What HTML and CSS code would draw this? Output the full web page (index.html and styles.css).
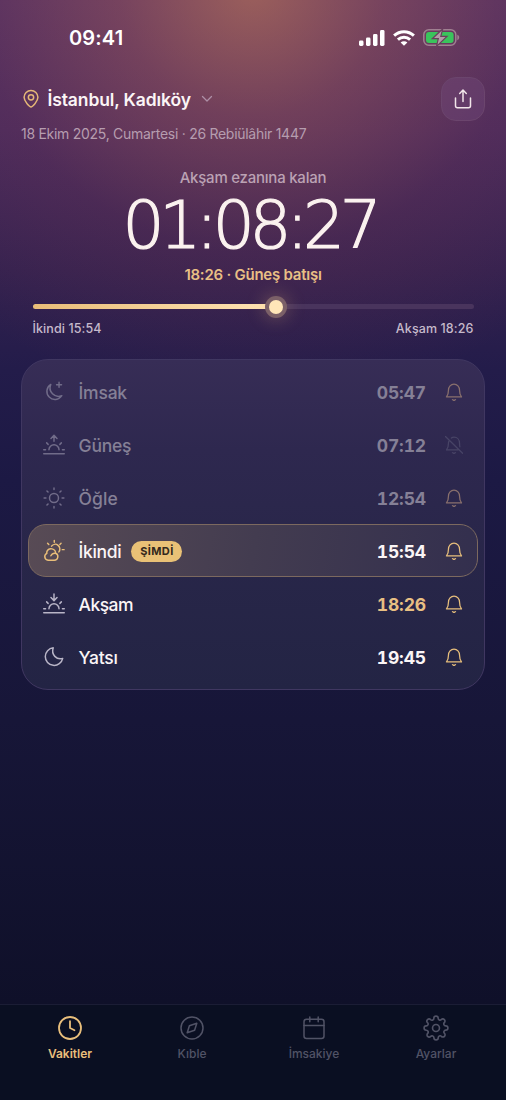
FILE: index.html
```
<!DOCTYPE html>
<html lang="tr">
<head>
<meta charset="utf-8">
<title>Vakitler</title>
<link rel="stylesheet" href="styles.css">
</head>
<body>
<svg class="defs" width="0" height="0" aria-hidden="true">
  <symbol id="bell" viewBox="0 0 24 24"><path d="M2 18.500h20c-2-2.200-2.600-4.300-2.600-8.800C19.400 5 16.200 1.600 12 1.600S4.600 5 4.600 9.700c0 4.500-.6 6.600-2.600 8.800zM10 22.200c1 1 3 1 4 0"/></symbol>
  <symbol id="belloff" viewBox="0 0 24 24"><path d="M17 18.500H2c2-2.200 2.600-4.300 2.600-8.800q0-1.300.4-2.600M8.500 2.700c1-.7 2.200-1.100 3.500-1.100 4.200 0 7.400 3.400 7.400 8.100 0 2.200.1 3.700.4 4.900M10 22.200c1 1 3 1 4 0M.5.500 23.500 23"/></symbol>
</svg>
<main class="screen">
  <header class="status">
    <span class="clock">09:41</span>
    <div class="signals">
      <svg width="26" height="17" viewBox="0 0 26 17"><g fill="#fff"><rect x="0" y="10.500" width="4.500" height="5.500" rx="1.400"/><rect x="7" y="7.500" width="4.500" height="8.500" rx="1.400"/><rect x="14" y="4" width="4.500" height="12" rx="1.400"/><rect x="21" y="0" width="4.500" height="16" rx="1.400"/></g></svg>
      <svg width="22" height="17" viewBox="0 0 22 17" fill="none" stroke="#fff" stroke-width="3"><path d="M1.100 5.700C6.800.4 15.200.4 20.900 5.700M4.900 9.700c3.500-3.200 8.700-3.200 12.200 0"/><path d="M11 15.800 7.600 12.400c1.900-1.600 4.900-1.600 6.800 0z" fill="#fff" stroke="none"/></svg>
      <svg width="37" height="18" viewBox="0 0 37 18"><rect x=".8" y=".8" width="32" height="15.400" rx="5" fill="none" stroke="#9f8091" stroke-width="1.500"/><rect x="3" y="3" width="27.600" height="11" rx="3" fill="#3ac45c"/><path d="M34.300 5.800c2.500.8 2.500 4.600 0 5.400z" fill="#9f8091"/><path d="M19.800-.3 9.300 9.700h6L13.500 17.400 24 7.400h-6.200z" class="bolt"/></svg>
    </div>
  </header>

  <section class="top">
    <div>
      <div class="place">
        <svg class="pin" width="20" height="20" viewBox="0 0 24 24"><path d="M12 21.500c-1.500 0-8.300-6.500-8.300-11.500a8.300 8.300 0 0 1 16.600 0c0 5-6.800 11.500-8.300 11.500z"/><circle cx="12" cy="10" r="3.200"/></svg>
        <span class="city">İstanbul, Kadıköy</span>
        <svg class="chev" width="12" height="8" viewBox="0 0 12 8"><path d="m1.500 1.500 4.500 4.500 4.500-4.500"/></svg>
      </div>
      <p class="date">18 Ekim 2025, Cumartesi · 26 Rebiülâhir 1447</p>
    </div>
    <button class="share" aria-label="Paylaş"><svg width="22" height="22" viewBox="0 0 22 22"><path d="M3.500 10v7.800q0 2 2 2h11q2 0 2-2V10M11 13.500V2.300M7.700 5.500 11 2.100l3.300 3.400"/></svg></button>
  </section>

  <section class="hero">
    <p class="label">Akşam ezanına kalan</p>
    <div class="count">01:08:27</div>
    <p class="target">18:26 · Güneş batışı</p>
    <div class="track"><div class="fill"></div><div class="knob"></div></div>
    <div class="ends"><span class="from">İkindi 15:54</span><span class="to">Akşam 18:26</span></div>
  </section>

  <section class="card">
    <div class="row past">
      <svg class="ico" viewBox="0 0 24 24"><path d="M8.500 3.800A8.800 8.800 0 1 0 20.500 16 9.200 9.200 0 0 1 8.500 3.800zM17.500 1.300v5.400M14.800 4h5.400"/></svg>
      <span class="name n1">İmsak</span><time>05:47</time><svg class="bell"><use href="#bell"/></svg>
    </div>
    <div class="row past">
      <svg class="ico" viewBox="0 0 24 24"><path d="M.8 21.500h22.400M.8 17.200h2M21.200 17.200h2M6.500 17.200a5.500 5.500 0 0 1 11 0M4 9.700l1.600 1.600M20 9.700l-1.600 1.600M12 8V2M8.700 4.800 12 1.500 15.300 4.800"/></svg>
      <span class="name n2">Güneş</span><time>07:12</time><svg class="bell off"><use href="#belloff"/></svg>
    </div>
    <div class="row past">
      <svg class="ico" viewBox="0 0 24 24"><circle cx="12" cy="12" r="4.900"/><path d="M12 1.200v1.500M12 21.300v1.500M1.200 12h2M20.800 12h2M4.300 4.300l1.200 1.200M18.500 18.500l1.200 1.200M4.300 19.700l1.200-1.200M18.500 5.500l1.200-1.200"/></svg>
      <span class="name n3">Öğle</span><time>12:54</time><svg class="bell"><use href="#bell"/></svg>
    </div>
    <div class="row now">
      <svg class="ico" viewBox="0 0 24 24"><path d="M5.500 22h6.700a3.900 3.900 0 0 0 1.600-7.500A5 5 0 0 0 4.300 12.400c-.2.700-.2 1.400-.1 2.100A3.950 3.950 0 0 0 5.500 22M8.600 17.200c1-2.100 3.200-3 5.200-2.700M9.300 6.700a5 5 0 0 1 8 6.300M12.300.6v1.800M21 10.500h2M5 3.600l1.300 1.300M19.700 3.600l-1.300 1.300"/></svg>
      <span class="name n4">İkindi</span><span class="tag"><b>ŞİMDİ</b></span><time>15:54</time><svg class="bell"><use href="#bell"/></svg>
    </div>
    <div class="row next">
      <svg class="ico" viewBox="0 0 24 24"><path d="M.8 21.500h22.400M.8 17.200h2M21.200 17.200h2M6.500 17.200a5.500 5.500 0 0 1 11 0M4 9.700l1.600 1.600M20 9.700l-1.600 1.600M12 1v6.900M8.700 5 12 8.300l3.300-3.300"/></svg>
      <span class="name n5">Akşam</span><time>18:26</time><svg class="bell"><use href="#bell"/></svg>
    </div>
    <div class="row">
      <svg class="ico" viewBox="0 0 24 24"><path d="M11.200 2A9.600 9.600 0 1 0 21.500 13.500 C15 15.500 8.500 9.500 11.200 2z"/></svg>
      <span class="name n6">Yatsı</span><time>19:45</time><svg class="bell"><use href="#bell"/></svg>
    </div>
  </section>

  <nav class="tabs">
    <a class="tab on"><svg viewBox="0 0 26 26"><circle cx="13" cy="13" r="11"/><path d="M13 6.200V13l4.500 2.200"/></svg><span class="t1">Vakitler</span></a>
    <a class="tab"><svg viewBox="0 0 26 26"><circle cx="13" cy="13" r="11"/><path d="m17.800 8.200-2.200 7-7.400 2.600 2.200-7z"/></svg><span class="t2">Kıble</span></a>
    <a class="tab"><svg viewBox="0 0 26 26"><rect x="3" y="4.300" width="20" height="19.200" rx="2.500"/><path d="M3 10.600h20M8.800 2v4.800M17.200 2v4.800"/></svg><span class="t3">İmsakiye</span></a>
    <a class="tab"><svg viewBox="0 0 24 24"><circle cx="12" cy="12" r="3.200"/><path d="M19.400 15a1.650 1.650 0 0 0 .33 1.820l.06.060a2 2 0 1 1-2.830 2.830l-.06-.06a1.650 1.650 0 0 0-1.820-.33 1.650 1.650 0 0 0-1 1.510V21a2 2 0 0 1-4 0v-.09A1.650 1.650 0 0 0 9 19.400a1.650 1.650 0 0 0-1.820.33l-.06.06a2 2 0 1 1-2.830-2.830l.06-.06a1.650 1.650 0 0 0 .33-1.820 1.650 1.650 0 0 0-1.510-1H3a2 2 0 0 1 0-4h.09A1.650 1.650 0 0 0 4.600 9a1.650 1.650 0 0 0-.33-1.820l-.06-.06a2 2 0 1 1 2.830-2.830l.06.06a1.650 1.650 0 0 0 1.820.33H9a1.650 1.650 0 0 0 1-1.510V3a2 2 0 0 1 4 0v.09a1.650 1.650 0 0 0 1 1.510 1.650 1.650 0 0 0 1.820-.33l.06-.06a2 2 0 1 1 2.830 2.830l-.06.06a1.650 1.650 0 0 0-.33 1.820V9a1.650 1.650 0 0 0 1.510 1H21a2 2 0 0 1 0 4h-.09a1.650 1.650 0 0 0-1.510 1z"/></svg><span class="t4">Ayarlar</span></a>
  </nav>
</main>
</body>
</html>
```
FILE: styles.css
```
* { box-sizing: border-box; }
body { margin: 0; font-family: Inter, "Open Sans", sans-serif; color: #fbf5f6; }
p { margin: 0; }
svg { fill: none; stroke-linecap: round; stroke-linejoin: round; flex: none; }
.defs { position: absolute; }
.screen {
  width: 506px; height: 1100px; display: flex; flex-direction: column; overflow: hidden;
  background:
    radial-gradient(440px 420px at 50% -10px, rgba(235,145,85,.49) 0, rgba(225,120,85,.28) 30%, rgba(180,75,85,.13) 62%, rgba(160,60,90,0) 100%),
    linear-gradient(#4e2f62 0, #45295c 130px, #33214f 270px, #231c4a 370px, #1c1944 480px, #171638 720px, #0f1029 1004px);
}
.status { height: 76px; padding: 0 46px 0 69px; display: flex; justify-content: space-between; align-items: center; }
.clock { font-size: 20px; font-weight: 600; line-height: 24px; letter-spacing: .15px; color: #fff; }
.signals { display: flex; align-items: center; gap: 8px; }
.signals svg { stroke-linecap: butt; stroke-linejoin: miter; }
.bolt { fill: #b39ba8; stroke: #69405c; stroke-width: 1.200; }

.top { height: 78px; padding: 1px 21px 0; display: flex; justify-content: space-between; align-items: flex-start; }
.place { height: 44px; display: flex; align-items: center; }
.pin { stroke: #e5b877; stroke-width: 1.800; }
.city { margin-left: 6.500px; width: 146px; font-size: 17.500px; font-weight: 600; letter-spacing: -.12px; white-space: nowrap; }
.chev { margin-left: 7px; stroke: #ad8fa6; stroke-width: 1.300; }
.date { margin-top: 4px; font-size: 14px; line-height: 18px; color: #b69daf; letter-spacing: -.28px; white-space: nowrap; }
.share { width: 44px; height: 44px; padding: 0; border: 1px solid #6b456d; border-radius: 15px; background: rgba(115,75,125,.4); display: grid; place-items: center; }
.share svg { stroke: #f2e6ea; stroke-width: 1.500; }

.hero { height: 205px; padding: 14px 33px 0; display: flex; flex-direction: column; align-items: center; }
.label { font-size: 15px; line-height: 20px; color: #bba2b4; letter-spacing: -.23px; font-weight: 500; }
.count { height: 76px; font-family: "DejaVu Sans Light", "DejaVu Sans ExtraLight", "DejaVu Sans", sans-serif; font-weight: 200; font-size: 66px; line-height: 76px; letter-spacing: -5.300px; color: #fbf2ef; -webkit-text-stroke: 1.200px #fbf2ef; margin-right: 7px; }
.target { margin-top: 1px; font-size: 15px; line-height: 20px; font-weight: 600; color: #e8bf85; letter-spacing: -.24px; }
.track { position: relative; margin-top: 19px; width: 441px; height: 5px; border-radius: 3px; background: #49345d; }
.fill { width: 243px; height: 5px; border-radius: 3px; background: linear-gradient(90deg, #e9bd78, #ffe4b5); }
.knob { position: absolute; left: 236px; top: -4.500px; width: 14px; height: 14px; border-radius: 50%; background: #ffe6b8; box-shadow: 0 0 0 4px #7b6068, 0 0 18px 5px rgba(240,190,120,.28); }
.ends { width: 441px; margin-top: 11px; display: flex; justify-content: space-between; font-size: 12.500px; line-height: 17px; color: #c6bacb; font-weight: 500; letter-spacing: .1px; }

.card { margin: 0 21px; padding: 5px 6px; height: 331px; border: 1px solid #403761; border-radius: 27px; background: linear-gradient(#372d56 0, #2e284f 90px, #282649 200px, #232444 100%); }
.row { height: 53px; padding: 1px 14px 0; display: flex; align-items: center; border: 1px solid transparent; }
.ico { width: 22px; height: 22px; stroke: #b9b5c7; stroke-width: 1.600; overflow: visible; }
.name { padding-top: 1px; margin-left: 13.500px; font-size: 17.500px; line-height: 22px; font-weight: 500; letter-spacing: -.2px; white-space: nowrap; }
.n3 { letter-spacing: .15px; }
.n4 { letter-spacing: -.3px; }
.n5, .n6 { letter-spacing: -.25px; font-weight: 550; }
.n5 { letter-spacing: -.5px; }
.row time { padding-top: 1px; margin-left: auto; width: 50px; font-size: 17.500px; line-height: 22px; font-weight: 650; text-align: right; font-feature-settings: "tnum"; letter-spacing: -.15px; white-space: nowrap; }
.bell { width: 18px; height: 18px; margin-left: 19px; stroke: #e8bf7c; stroke-width: 1.700; overflow: visible; }
.past .name { color: #858096; }
.past time { color: #858096; }
.past .ico { stroke: #716c89; }
.past .bell { stroke: #89706d; }
.past .bell.off { stroke: #484466; }
.now { border-color: #7c695f; border-radius: 18px; background: linear-gradient(100deg, #584b55, #433c50 50%, #332f4e); }
.now .ico { stroke: #e9be79; }
.next time { color: #e8bf83; }
.tag { margin-left: 10px; width: 51px; height: 21px; border-radius: 11px; background: #e9c176; color: #33291d; display: grid; place-items: center; font-size: 11px; line-height: 21px; }
.tag b { font-weight: 700; white-space: nowrap; letter-spacing: .35px; }

.tabs { margin-top: auto; height: 96px; padding: 10px 9px 0; border-top: 1px solid #1b1d35; background: #0a0f22; display: grid; grid-template-columns: repeat(4, 1fr); }
.tab { display: flex; flex-direction: column; align-items: center; gap: 4px; color: #515366; font-size: 12px; line-height: 18px; font-weight: 500; }
.tab svg { width: 26px; height: 26px; stroke: #515366; stroke-width: 1.500; }
.tab.on { color: #e9bf7c; font-weight: 600; }
.tab.on svg { stroke: #e9bf7c; stroke-width: 1.800; }
```
